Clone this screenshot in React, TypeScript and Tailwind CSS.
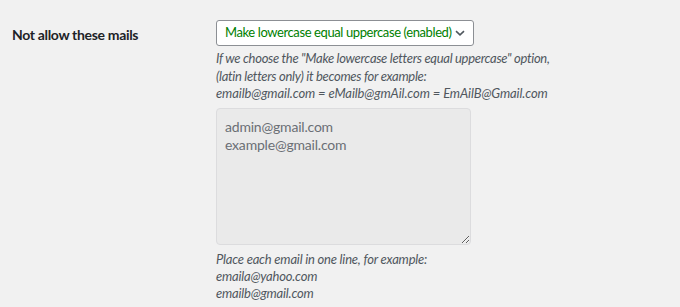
import React from 'react';

const emails = ['admin@gmail.com', 'example@gmail.com'];

function App() {
  return (
    <div className="min-h-[307px] w-[680px] bg-[#f1f1f1] text-[#3c434a] font-['Segoe_UI','Lato',sans-serif]">
      <div className="flex pt-[20px]">
        <div className="w-[216px] shrink-0 pl-[12px] pt-[5px] text-[14px] font-bold tracking-[-0.33px] text-[#1d2327] leading-[20px]">
          Not allow these mails
        </div>
        <div className="flex flex-col">
          <div className="flex h-[26px] w-[258px] items-center justify-between rounded-[3px] border border-[#8c8f94] bg-white pl-[8px] pr-[7px]">
            <span className="whitespace-nowrap text-[13px] tracking-[-0.4px] text-[#008000]">
              Make lowercase equal uppercase (enabled)
            </span>
            <svg width="12" height="12" viewBox="0 0 12 12" className="shrink-0 text-[#50575e]">
              <path d="M2 4.2l4 3.6 4-3.6" fill="none" stroke="currentColor" strokeWidth="1.6" />
            </svg>
          </div>
          <p className="mt-[3px] text-[13px] italic leading-[18px] tracking-[-0.3px] text-[#50575e]">
            If we choose the "Make lowercase letters equal uppercase" option,
            <br />
            (latin letters only) it becomes for example:
          </p>
          <p className="text-[13px] italic leading-[17px] tracking-[-0.1px] text-[#50575e]">
            emailb@gmail.com = eMailb@gmAil.com = EmAilB@Gmail.com
          </p>
          <textarea
            readOnly
            defaultValue={emails.join('\n')}
            className="mt-[6px] h-[137px] w-[255px] resize rounded-[4px] border border-[#dcdcde] bg-[#eaeaea] px-[8px] pt-[9px] text-[14px] leading-[17.5px] tracking-[-0.2px] text-[#6b6f75] outline-none"
          />
          <p className="mt-[6px] text-[13px] italic leading-[17px] tracking-[-0.2px] text-[#50575e]">
            Place each email in one line, for example:
            <br />
            emaila@yahoo.com
            <br />
            emailb@gmail.com
          </p>
        </div>
      </div>
    </div>
  );
}

export default App;
